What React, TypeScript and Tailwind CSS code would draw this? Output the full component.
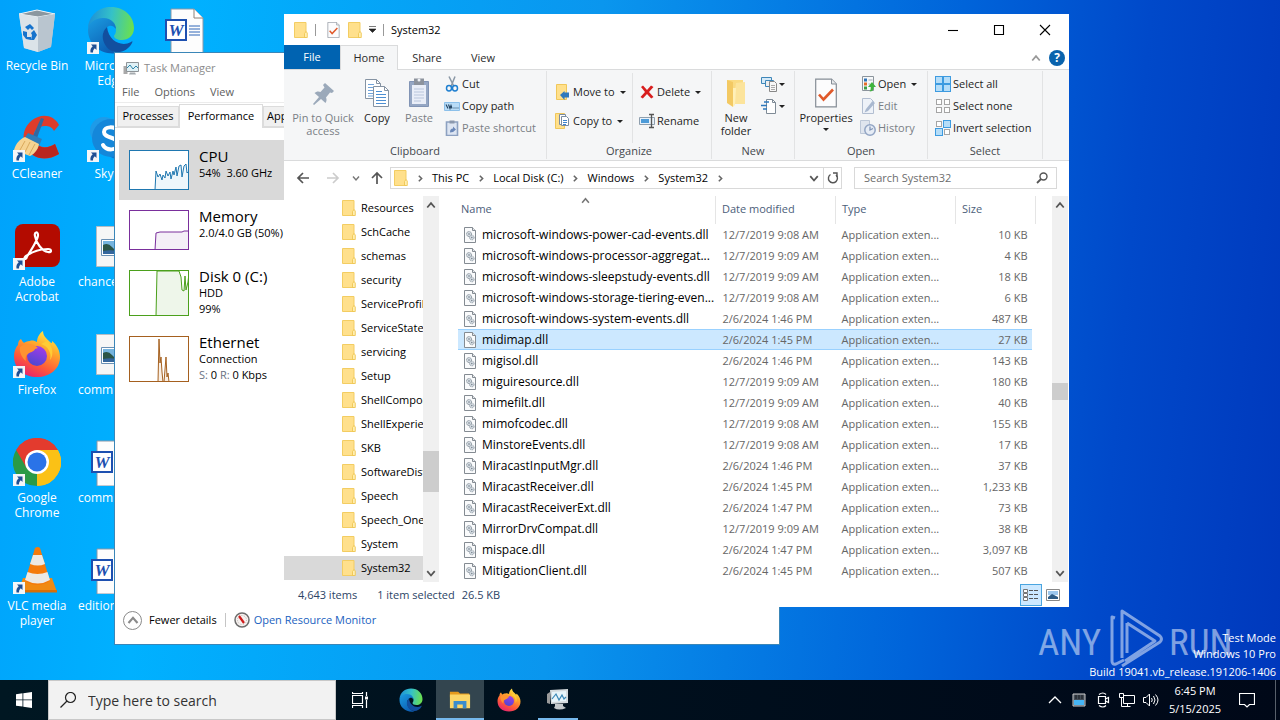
import type { ReactNode } from "react";

const files = [
  ["microsoft-windows-power-cad-events.dll", "12/7/2019 9:08 AM", "10 KB"],
  ["microsoft-windows-processor-aggregat...", "12/7/2019 9:09 AM", "4 KB"],
  ["microsoft-windows-sleepstudy-events.dll", "12/7/2019 9:09 AM", "18 KB"],
  ["microsoft-windows-storage-tiering-even...", "12/7/2019 9:08 AM", "6 KB"],
  ["microsoft-windows-system-events.dll", "2/6/2024 1:46 PM", "487 KB"],
  ["midimap.dll", "2/6/2024 1:45 PM", "27 KB"],
  ["migisol.dll", "2/6/2024 1:46 PM", "143 KB"],
  ["miguiresource.dll", "12/7/2019 9:09 AM", "180 KB"],
  ["mimefilt.dll", "12/7/2019 9:09 AM", "40 KB"],
  ["mimofcodec.dll", "12/7/2019 9:08 AM", "155 KB"],
  ["MinstoreEvents.dll", "12/7/2019 9:08 AM", "17 KB"],
  ["MiracastInputMgr.dll", "2/6/2024 1:46 PM", "37 KB"],
  ["MiracastReceiver.dll", "2/6/2024 1:45 PM", "1,233 KB"],
  ["MiracastReceiverExt.dll", "2/6/2024 1:47 PM", "73 KB"],
  ["MirrorDrvCompat.dll", "12/7/2019 9:09 AM", "38 KB"],
  ["mispace.dll", "2/6/2024 1:47 PM", "3,097 KB"],
  ["MitigationClient.dll", "2/6/2024 1:45 PM", "507 KB"],
];

const folders = [
  "Resources",
  "SchCache",
  "schemas",
  "security",
  "ServiceProfiles",
  "ServiceState",
  "servicing",
  "Setup",
  "ShellComponents",
  "ShellExperiences",
  "SKB",
  "SoftwareDistribution",
  "Speech",
  "Speech_OneCore",
  "System",
  "System32",
];

/* ---------- small icons ---------- */

const FolderIcon = () => (
  <svg className="h-4 w-[14px] shrink-0" viewBox="0 0 14 16">
    <path d="M.5.5h11.500v15H.5z" fill="#ffe08c" stroke="#f3cd62" />
    <path d="M10.500 15.500v-4l1.500-2 1.300 1.500v4.500z" fill="#ffeeb0" stroke="#eec34a" strokeWidth=".8" />
  </svg>
);

const DllIcon = () => (
  <svg className="h-4 w-[14px] shrink-0" viewBox="0 0 14 16">
    <path d="M1.500.5h8l3 3v12h-11z" fill="#fafbfc" stroke="#848b92" />
    <path d="M9.500.5v3h3" fill="#e6e9ec" stroke="#848b92" />
    <circle cx="6" cy="7" r="2.500" fill="#d5dce2" stroke="#7f8a95" strokeDasharray="1.200 .6" />
    <circle cx="6" cy="7" r=".8" fill="#6f7c88" />
    <circle cx="8.800" cy="10.500" r="2.300" fill="#d5dce2" stroke="#8f9aa5" strokeDasharray="1.200 .6" />
    <circle cx="8.800" cy="10.500" r=".7" fill="#6f7c88" />
  </svg>
);

const CheckPageIcon = ({ className }: { className: string }) => (
  <svg className={className} viewBox="0 0 22 29">
    <path d="M.7.7h15.800l4.800 4.800v22.800H.7z" fill="#fcfcfd" stroke="#858d96" strokeWidth="1.200" />
    <path d="M16.500.7v4.800h4.800" fill="#e8eaec" stroke="#858d96" />
    <path d="M4 16l4.500 5L18 11" fill="none" stroke="#e0592a" strokeWidth="2.600" />
  </svg>
);

const Caret = () => (
  <svg className="h-[3px] w-[6px] shrink-0" viewBox="0 0 6 3">
    <path d="M0 0h6L3 3z" fill="#222" />
  </svg>
);

const Chevron = ({ dir = "down", color = "#555", className = "h-2 w-2" }: { dir?: "up" | "down" | "right"; color?: string; className?: string }) => {
  const d = { up: "M1 6l3-3.500 3 3.500", down: "M1 2.500l3 3.500 3-3.500", right: "M2.500 1.500L5 4 2.500 6.500" }[dir];
  return (
    <svg className={className} viewBox="0 0 8 8">
      <path d={d} fill="none" stroke={color} strokeWidth="1.400" />
    </svg>
  );
};

const PinIcon = () => (
  <svg className="size-8" viewBox="0 0 32 32">
    <path d="M18 6l9 8-2 2-2-.5-4 5c1 2 .5 4-.5 5.500L14 22l-7 6-1-1 6-7-4.500-4c1.500-1.500 4-2 6-1l4-4.500L16 8z" fill="#9ba9ba" />
  </svg>
);

const CopyIcon = () => (
  <svg className="size-8" viewBox="0 0 32 32">
    <path d="M4.500 2.500h11l4 4v15h-15z" fill="#fff" stroke="#8593a3" />
    <path d="M15.500 2.500v4h4" fill="none" stroke="#8593a3" />
    <path d="M7 7.500h6M7 10.500h10M7 13.500h10M7 16.500h10M7 19h8" stroke="#6fa3da" />
    <path d="M12.500 9.500h11l4 4v16h-15z" fill="#fff" stroke="#8593a3" />
    <path d="M23.500 9.500v4h4" fill="none" stroke="#8593a3" />
    <path d="M15 14.500h6M15 17.500h10M15 20.500h10M15 23.500h10M15 26.500h10" stroke="#4d8fd2" />
  </svg>
);

const PasteIcon = () => (
  <svg className="size-8" viewBox="0 0 32 32">
    <path d="M6.500 4.500h19v25h-19z" fill="#95a7c4" stroke="#8194b5" />
    <path d="M9 8h14v19H9z" fill="#e9eef8" />
    <path d="M11 1.500h10V8H11z" fill="#8c939d" />
    <circle cx="16" cy="3" r="1.500" fill="#eef1f6" />
    <path d="M11 12h10M11 15h10M11 18h10M11 21h10M11 24h7" stroke="#b9c6dc" />
  </svg>
);

const CutIcon = () => (
  <svg className="size-4" viewBox="0 0 16 16">
    <path d="M5 .5l5 10M11 .5l-4 10" stroke="#8a98a6" strokeWidth="1.500" />
    <ellipse cx="5" cy="12.300" rx="2.500" ry="2.700" fill="none" stroke="#1e7fd0" strokeWidth="1.500" />
    <ellipse cx="11" cy="12.300" rx="2.500" ry="2.700" fill="none" stroke="#1e7fd0" strokeWidth="1.500" />
  </svg>
);

const CopyPathIcon = () => (
  <svg className="size-4" viewBox="0 0 16 16">
    <path d="M.5 4.500h15v8H.5z" fill="#b9dcf7" stroke="#8cc0ea" />
    <path d="M2 6.500l2 4M4.500 6.500l1.500 4 1-3 1 3M9.500 10h1M11.500 10h1M13.500 10h1" fill="none" stroke="#20405f" strokeWidth="1.100" />
  </svg>
);

const PasteShortcutIcon = () => (
  <svg className="size-4" viewBox="0 0 16 16">
    <path d="M2.500 2h11v13.500h-11z" fill="#dde5f2" stroke="#8da1c1" strokeWidth="1.600" />
    <path d="M5.500.5h5v3h-5z" fill="#8b98ad" />
    <path d="M6 12.500c0-3 1-4 3-4V6.500l3 3-3 2.500" fill="#6b88b8" />
  </svg>
);

const MoveIcon = () => (
  <svg className="size-4" viewBox="0 0 16 16">
    <path d="M1.500.5h10v15h-10z" fill="#ffe08c" stroke="#f0c75a" />
    <path d="M14 8.500v5H9.500V16L5 11l4.500-4v1.500z" fill="#2f79bd" />
  </svg>
);

const CopyToIcon = () => (
  <svg className="size-4" viewBox="0 0 16 16">
    <path d="M.5.5h9v15h-9z" fill="#ffe08c" stroke="#f0c75a" />
    <path d="M4.500 1.500h6v10h-6z" fill="#fff" stroke="#7b8ca0" />
    <path d="M6.500 3.500h5l2 2v7h-7z" fill="#fff" stroke="#7b8ca0" />
    <path d="M8 7.500h4M8 9.500h4M8 11.500h3" stroke="#3c83cc" />
  </svg>
);

const DeleteIcon = () => (
  <svg className="size-4" viewBox="0 0 16 16">
    <path d="M2 3l2-1.500L8 6l4-4.500L14.500 3 10 8l4.500 5-2.300 1.500L8 10l-4.200 4.500L1.500 13 6 8z" fill="#d81e1e" />
  </svg>
);

const RenameIcon = () => (
  <svg className="size-4" viewBox="0 0 16 16">
    <path d="M.5 4.500h15v7H.5z" fill="#e8f1fa" stroke="#8f9fae" />
    <path d="M2 6h8v4H2z" fill="#4d9bd8" />
    <path d="M12.500 1.500v13M10 1.500h5M10 14.500h5" stroke="#555" strokeWidth="1.300" />
  </svg>
);

const NewFolderIcon = () => (
  <svg className="size-8" viewBox="0 0 32 32">
    <path d="M7 3h16v23H7z" fill="#fadb83" />
    <path d="M16 6l9-1v22H13z" fill="#fce49c" />
    <path d="M7 3l6 2v25l-6-4z" fill="#f3c963" />
    <path d="M13 11h3l-1 17-2 2z" fill="#fff0b8" />
  </svg>
);

const NewItemIcon = () => (
  <svg className="size-4" viewBox="0 0 16 16">
    <path d="M.5 1.500h10v6H.5z" fill="#d5eaf8" stroke="#3e86b8" />
    <path d="M4.500 4.500h8v6h-8z" fill="#eee" stroke="#3e86b8" />
    <path d="M8.500 5.500h5l2 2v8h-7z" fill="#f7f7f7" stroke="#888" />
    <path d="M10 9.500h4M10 11.500h4M10 13.500h4" stroke="#aaa" />
  </svg>
);

const EasyAccessIcon = () => (
  <svg className="size-4" viewBox="0 0 16 16">
    <path d="M5.500 1.500h6l3 3v11h-9z" fill="#fff" stroke="#7f8b96" />
    <path d="M11.500 1.500v3h3" fill="none" stroke="#7f8b96" />
    <path d="M3 4h5M0 7.500h6M2 11h4" stroke="#2f79bd" strokeWidth="1.300" />
  </svg>
);

const OpenIcon = () => (
  <svg className="size-4" viewBox="0 0 16 16">
    <path d="M2.500.5h11v14h-11z" fill="#f7f9fa" stroke="#8b949c" />
    <path d="M4 2.500h3v3H4z" fill="#2e73b8" />
    <path d="M4 6.500h3v3H4z" fill="#e36d28" />
    <path d="M4 10.500h3v3H4z" fill="#3c9d45" />
    <path d="M8.500 4h4M8.500 8h2" stroke="#a2abb4" />
    <path d="M12 6l4 5h-2.500c0 3-1 4.500-4 4.500 1-1 1.300-2.500 1.200-4.500H8z" fill="#3fb43d" />
  </svg>
);

const EditIcon = () => (
  <svg className="size-4" viewBox="0 0 16 16">
    <path d="M2.500.5h8l3 3v12h-11z" fill="#eef2f8" stroke="#b2bed1" />
    <path d="M12.500 3l2.500 2-7 8-3.500 1.500L6 11z" fill="#a9b8cf" />
  </svg>
);

const HistoryIcon = () => (
  <svg className="size-4" viewBox="0 0 16 16">
    <path d="M.5.5h9v13h-9z" fill="#dfe5ee" stroke="#bcc7d7" />
    <circle cx="10" cy="10" r="5.200" fill="#e6ecf5" stroke="#92a5c4" strokeWidth="1.500" />
    <path d="M10 6.500V10l3-1.500" fill="none" stroke="#8296b8" strokeWidth="1.300" />
  </svg>
);

// on[] marks which of the four tiles are filled
const TilesIcon = ({ on }: { on: boolean[] }) => (
  <svg className="size-4" viewBox="0 0 16 16">
    {on.map((filled, i) => {
      const x = (i % 2) * 8;
      const y = i > 1 ? 8 : 0;
      return filled ? (
        <rect key={i} x={x + 0.5} y={y + 0.5} width="7" height="7" fill="#b5ddf8" stroke="#3d9be0" />
      ) : (
        <rect key={i} x={x + 1.5} y={y + 1.5} width="5" height="5" fill="#fff" stroke="#a5a5a5" />
      );
    })}
  </svg>
);

/* ---------- desktop icons ---------- */

const ShortcutArrow = () => (
  <svg className="absolute bottom-0 left-0 size-3" viewBox="0 0 12 12">
    <path d="M0 0h12v12H0z" fill="#f4f6f8" />
    <path d="M4 2.500h5.500V8L7.800 6.300C6.500 7.500 6 8.500 6 10.500H3.500C3 7.500 4 6 5.700 4.300z" fill="#1f4f93" />
  </svg>
);

const EdgeLogo = ({ className }: { className: string }) => (
  <svg className={className} viewBox="0 0 48 48">
    <defs>
      <linearGradient id="edgeTop" x1="0" y1=".3" x2="1" y2=".4">
        <stop offset="0" stopColor="#1c8fd8" />
        <stop offset=".5" stopColor="#35c1c8" />
        <stop offset="1" stopColor="#6be04e" />
      </linearGradient>
      <linearGradient id="edgeLeft" x1="0" y1="0" x2=".6" y2="1">
        <stop offset="0" stopColor="#1b9de2" />
        <stop offset="1" stopColor="#0c5fb4" />
      </linearGradient>
    </defs>
    <path d="M1 22C2 9 12 1 24 1c14 0 23 10 23 21 0 8-6 12-12 12-5 0-8-2-8-4 0-1 2-2 2-6 0-5-5-9-12-9-8 0-14 3-16 7z" fill="url(#edgeTop)" />
    <path d="M1 24c0-7 7-12 15-12 9 0 13 6 13 11-2-3-5-4-7-3-6 3-8 11-3 18 3 5 7 8 12 9C15 50 1 39 1 24z" fill="url(#edgeLeft)" />
    <path d="M20 21c-7 6-5 17 3 23 8 5 18 1 22-7 1-2 0-2-1-1-9 5-22 0-24-15z" fill="#124f9f" />
  </svg>
);

const FirefoxLogo = ({ className }: { className: string }) => (
  <svg className={className} viewBox="0 0 48 48">
    <defs>
      <linearGradient id="foxBody" x1=".8" y1="0" x2=".3" y2="1">
        <stop offset="0" stopColor="#fff04a" />
        <stop offset=".35" stopColor="#ffa92b" />
        <stop offset=".7" stopColor="#ff5a38" />
        <stop offset="1" stopColor="#e6236f" />
      </linearGradient>
      <linearGradient id="foxGlobe" x1=".7" y1="0" x2=".3" y2="1">
        <stop offset="0" stopColor="#a23be8" />
        <stop offset="1" stopColor="#4a48d0" />
      </linearGradient>
    </defs>
    <path d="M8 9c1 2 2 3 3 4 1-1 3-2 6-2 2-1 5 0 7 1 0-5 3-9 6-11 0 5 4 8 7 11 2 2 2 1 2-1 5 4 8 10 8 16 0 12-10 20-23 20S1 39 1 26c0-5 2-9 4-11 0-3 1-5 3-6z" fill="url(#foxBody)" />
    <circle cx="24" cy="26" r="10" fill="url(#foxGlobe)" />
    <path d="M7 17c5-4 13-4 18 1l-3 1c-1 3-5 3-7 5-2 1-3 4-2 7-4-3-7-9-6-14z" fill="#ff9330" />
    <path d="M28 14c7 2 11 9 9 16 4-5 3-14-3-19z" fill="#ffcc35" />
  </svg>
);

const RecycleBin = () => (
  <svg className="size-12" viewBox="0 0 48 48">
    <path d="M6 8l18-4 18 4-4 33-13 5-14-4z" fill="#c6d3dc" />
    <path d="M6 8l19 3 17-3-18-4z" fill="#8b979f" stroke="#eef4f8" />
    <path d="M6 8l19 3v35l-14-4z" fill="#dbe3e8" />
    <path d="M25 11l17-3-4 33-13 5z" fill="#b9c5cf" />
    <path d="M12 21l5-3 4 4-2 2-2-2-2 2zM10 25l4 1v5h4v3l-5-1-3-4zM21 24l3 5-3 5h-3l1-5-1-2z" fill="#1673cc" />
  </svg>
);

const CCleaner = () => (
  <svg className="size-12" viewBox="0 0 48 48">
    <path d="M46 11C42 3 33 0 25 3 12 8 8 21 12 31c5 13 20 18 34 9l-4-10c-8 5-17 4-20-3-4-8 2-15 10-15 4 0 7 1 9 5z" fill="#de3c2b" />
    <path d="M46 40C36 46 24 46 16 38l7-8c5 5 13 4 19 0z" fill="#b92620" />
    <path d="M28 4l3 1-7 19-4-2z" fill="#33689f" />
    <path d="M15 19l14 6-3 7-15-7z" fill="#2f7db9" />
    <path d="M12 23l14 7c-1 6-5 10-9 12L1 36c2-7 6-11 11-13z" fill="#f6d392" />
    <path d="M12 27L7 36M17 28l-5 10M22 30l-6 11" stroke="#d9a95d" />
  </svg>
);

const Skype = () => (
  <svg className="size-12" viewBox="0 0 48 48">
    <circle cx="17" cy="17" r="14" fill="#1e9be8" />
    <circle cx="31" cy="31" r="14" fill="#0b77cf" />
    <circle cx="24" cy="24" r="19" fill="#1487da" />
    <path d="M31 17c-3-5-14-5-14 1 0 7 14 4 14 12 0 7-12 7-15 1" fill="none" stroke="#fff" strokeWidth="4" strokeLinecap="round" />
  </svg>
);

const Acrobat = () => (
  <svg className="size-12" viewBox="0 0 48 48">
    <rect x="2" y="2" width="45" height="43" rx="8" fill="#b30b00" />
    <path d="M13 36c4-6 12-18 12-23 0-4-4-3-3 1 1 7 7 15 13 16 4 1 4-3 0-3-8 0-16 3-22 7-3 2-1 5 1 1z" fill="none" stroke="#fff" strokeWidth="2.200" />
  </svg>
);

const Chrome = () => (
  <svg className="size-12" viewBox="0 0 48 48">
    <path d="M24 24L3.200 12A24 24 0 0 1 44.800 12z" fill="#e33b2e" />
    <path d="M24 24l20.800-12A24 24 0 0 1 24 48z" fill="#fbc116" />
    <path d="M24 24v24A24 24 0 0 1 3.200 12z" fill="#2a9a47" />
    <path d="M3.200 12L13.600 30 24 12h20.800A24 24 0 0 0 3.200 12z" fill="#e33b2e" />
    <path d="M24 12h20.800A24 24 0 0 1 24 48l10.400-18z" fill="#fbc116" />
    <circle cx="24" cy="24" r="12" fill="#fff" />
    <circle cx="24" cy="24" r="9.500" fill="#2a73e8" />
  </svg>
);

const Vlc = () => (
  <svg className="size-12" viewBox="0 0 48 48">
    <path d="M10 32h29l5 14H5z" fill="#f08a12" />
    <path d="M5 44h39v2.500H5z" fill="#d86f08" />
    <path d="M22 2q3-2 5 0l10 33q-13 8-25 0z" fill="#f47b0c" />
    <path d="M20 9h9l3 9q-7 3-15 0zM14.500 26q10 4 20 0l2.500 8q-12 7-25 0z" fill="#ece9e4" />
  </svg>
);

const WordDoc = () => (
  <svg className="size-12" viewBox="0 0 48 48">
    <path d="M10 3h23l9 9v36H10z" fill="#fdfdfd" stroke="#8997a8" />
    <path d="M33 3v9h9" fill="#fff" stroke="#8c8179" />
    <path d="M28 20h11M28 23h11M28 26h11M28 29h11" stroke="#2f66b8" />
    <rect x="5" y="14" width="20" height="20" fill="#fff" stroke="#1d50b0" strokeWidth="2" />
    <text x="15" y="30" textAnchor="middle" fontSize="17" fontWeight="900" fontStyle="italic" fontFamily="Liberation Serif, serif" fill="#1d50b0">
      W
    </text>
  </svg>
);

const ImageDoc = () => (
  <svg className="size-12" viewBox="0 0 48 48">
    <path d="M9.500 4.500h29v40h-29z" fill="#f6f6f6" stroke="#b3bcc4" />
    <path d="M14.500 17.500h22v16h-22z" fill="#fff" stroke="#6a90b4" />
    <path d="M16 19h19v13H16z" fill="#76b4de" />
    <path d="M16 23q5-3 9 2t10 3v4H16z" fill="#2c5547" />
    <path d="M16 29q9-2 19 1v2H16z" fill="#35669c" />
  </svg>
);

type DesktopItemProps = { label: string; icon: ReactNode; shortcut?: boolean; clipped?: boolean };

const DesktopItem = ({ label, icon, shortcut, clipped }: DesktopItemProps) => (
  <button className="flex h-[108px] flex-col items-center overflow-hidden pt-[6px] text-[12px] leading-[15px] text-white">
    <span className="relative block size-12">
      {icon}
      {shortcut && <ShortcutArrow />}
    </span>
    <span className={clipped ? "mt-1 w-full pl-1 text-left" : "mt-1 text-center"}>{label}</span>
  </button>
);

const desktopItems: DesktopItemProps[] = [
  { label: "Recycle Bin", icon: <RecycleBin /> },
  { label: "CCleaner", icon: <CCleaner />, shortcut: true },
  { label: "Adobe Acrobat", icon: <Acrobat />, shortcut: true },
  { label: "Firefox", icon: <FirefoxLogo className="size-12" />, shortcut: true },
  { label: "Google Chrome", icon: <Chrome />, shortcut: true },
  { label: "VLC media player", icon: <Vlc />, shortcut: true },
  { label: "Microsoft Edge", icon: <EdgeLogo className="size-12" />, shortcut: true },
  { label: "Skype", icon: <Skype />, shortcut: true },
  { label: "chance", icon: <ImageDoc />, clipped: true },
  { label: "comm", icon: <ImageDoc />, clipped: true },
  { label: "comm", icon: <WordDoc />, clipped: true },
  { label: "edition", icon: <WordDoc />, clipped: true },
  { label: "", icon: <WordDoc /> },
];

/* ---------- task manager ---------- */

const tiles = [
  {
    name: "CPU",
    lines: ["54%  3.60 GHz"],
    active: true,
    h: 40,
    color: "#1f77b0",
    fill: "#eef6fb",
    d: "M26 40l1-19 2 6 2-3 2 6 1-5 2 3 1-7 2 5 2-4 1 7 2-8 1 4 2-8 1 9 2-10 2-1 1 12 2-11 2-2 1 9 2-2v23",
  },
  { name: "Memory", lines: ["2.0/4.0 GB (50%)"], h: 40, color: "#7a2f9c", fill: "#f4eff7", d: "M26 40l1-17 4-1h22l2-1h5v19" },
  { name: "Disk 0 (C:)", lines: ["HDD", "99%"], h: 46, color: "#4ba01c", fill: "#eef6ea", d: "M27 46l1-45h22l2 6 1 13 2 1 1-15 1 14 2-8 1-9v43" },
  { name: "Ethernet", lines: ["Connection"], net: true, h: 46, color: "#a5601f", fill: "#f9efe4", d: "M29 46l1-43 1 24 1-6 1 15 1 10M35 46l2-25 1 20 1-4 1 9" },
];

const Speed = () => (
  <svg className="size-4" viewBox="0 0 16 16">
    <circle cx="8" cy="8" r="7" fill="#f6f1ef" stroke="#6d6d6d" strokeWidth="1.500" />
    <circle cx="8" cy="8" r="4.500" fill="none" stroke="#b9b3b0" strokeDasharray="1 1.500" />
    <path d="M5 4l5 7" stroke="#cf1b1b" strokeWidth="2.200" />
  </svg>
);

const MonitorIcon = () => (
  <svg className="size-4" viewBox="0 0 16 16">
    <path d="M.5 6h4v8h-4z" fill="#a9a9a9" />
    <path d="M3.500 2.500h12v9h-12z" fill="#dff0f5" stroke="#8e9498" />
    <path d="M4 8l3-3 3 4 3-3 2 2" fill="none" stroke="#2d85aa" />
    <path d="M7 12.500h5l1 2H6z" fill="#a5abaf" />
  </svg>
);

const TaskManager = () => (
  <section className="absolute left-[115px] top-[53px] flex h-[591px] w-[664px] flex-col bg-white text-[11px] shadow-[0_0_0_1px_#3a86b8]">
    <header className="flex h-[30px] items-center gap-[5px] pl-2 text-[#8c8c8c]">
      <MonitorIcon />
      <h2>Task Manager</h2>
    </header>
    <nav className="flex h-5 items-center gap-[15px] border-b border-[#ececec] pl-[7px] text-[#606060]">
      <button>File</button>
      <button>Options</button>
      <button>View</button>
    </nav>
    <div className="mt-[2px] flex h-[23px] items-end border-b border-[#dcdcdc] pl-[2px]">
      <button className="h-[21px] w-[62px] border border-[#dcdcdc] bg-[#f0f0f0]">Processes</button>
      <button className="-mb-px h-6 w-[84px] border border-b-0 border-[#dcdcdc] bg-white">Performance</button>
      <button className="h-[21px] w-[66px] border border-[#dcdcdc] bg-[#f0f0f0] pl-[3px] text-left">App</button>
    </div>
    <div className="flex-1 pl-1 pt-3">
      {tiles.map(({ name, lines, active, net, h, color, fill, d }) => (
        <button
          key={name}
          className={`flex min-h-[60px] w-[210px] items-start gap-[10px] pb-[9px] pl-[10px] text-left ${active ? "bg-[#d9d9d9]" : ""}`}
        >
          <svg className="mt-[10px] w-[60px] shrink-0 bg-white" viewBox={`0 0 60 ${h}`}>
            <path d={d} fill={fill} stroke={color} strokeLinejoin="round" />
            <rect x=".5" y=".5" width="59" height={h - 1} fill="none" stroke={color} />
          </svg>
          <span className="block whitespace-pre pt-[7px] leading-4">
            <span className="block text-[15px] leading-[18px]">{name}</span>
            {lines.map((line) => (
              <span key={line} className="block">
                {line}
              </span>
            ))}
            {net && (
              <span className="block">
                <span className="text-gray-500">S:</span> 0 <span className="text-gray-500">R:</span> 0 Kbps
              </span>
            )}
          </span>
        </button>
      ))}
    </div>
    <footer className="flex h-12 items-center pl-2">
      <button className="flex items-center gap-[7px]">
        <span className="flex size-[19px] items-center justify-center rounded-full border border-[#8a8a8a]">
          <Chevron dir="up" color="#8a8a8a" className="size-3" />
        </span>
        Fewer details
      </button>
      <span className="mx-2 h-[14px] w-px bg-[#c5c5c5]" />
      <a href="#resmon" className="flex items-center gap-1 text-[#1a5fc0]">
        <Speed />
        Open Resource Monitor
      </a>
    </footer>
  </section>
);

/* ---------- explorer ---------- */

const Group = ({ label, className, children }: { label: string; className: string; children: ReactNode }) => (
  <div className={`my-px flex flex-col border-r border-[#e2e3e4] ${className}`}>
    <div className="flex h-[73px] pt-[2px]">{children}</div>
    <div className="text-center text-[#44484d]">{label}</div>
  </div>
);

const BigButton = ({ icon, label, className, disabled, caret }: { icon: ReactNode; label: string; className: string; disabled?: boolean; caret?: boolean }) => (
  <button disabled={disabled} className={`flex flex-col items-center pt-1 leading-[13px] disabled:text-[#7a7f86] ${className}`}>
    {icon}
    <span className="mt-[2px]">{label}</span>
    {caret && (
      <span className="mt-1">
        <Caret />
      </span>
    )}
  </button>
);

const SmallButton = ({ icon, label, disabled, caret }: { icon: ReactNode; label?: string; disabled?: boolean; caret?: boolean }) => (
  <button disabled={disabled} className="flex h-[22px] items-center gap-[2px] whitespace-nowrap disabled:text-[#7a7f86]">
    {icon}
    {label}
    {caret && (
      <span className={label ? "pl-[3px]" : ""}>
        <Caret />
      </span>
    )}
  </button>
);

const Ribbon = () => (
  <div className="flex h-[92px] border-y border-[#dadbdc] bg-[#f5f6f7] text-[11px] leading-4 text-[#1e1e1e]">
    <Group label="Clipboard" className="w-[263px]">
      <BigButton icon={<PinIcon />} label="Pin to Quick access" disabled className="ml-[3px] w-[72px]" />
      <BigButton icon={<CopyIcon />} label="Copy" className="w-9" />
      <BigButton icon={<PasteIcon />} label="Paste" disabled className="w-12" />
      <div className="pl-px">
        <SmallButton icon={<CutIcon />} label="Cut" />
        <SmallButton icon={<CopyPathIcon />} label="Copy path" />
        <SmallButton icon={<PasteShortcutIcon />} label="Paste shortcut" disabled />
      </div>
    </Group>
    <Group label="Organize" className="w-[165px]">
      <div className="flex w-[86px] flex-col gap-[7px] border-r border-[#e2e3e4] pl-2 pt-2">
        <SmallButton icon={<MoveIcon />} label="Move to" caret />
        <SmallButton icon={<CopyToIcon />} label="Copy to" caret />
      </div>
      <div className="flex flex-col gap-[7px] pl-[6px] pt-2">
        <SmallButton icon={<DeleteIcon />} label="Delete" caret />
        <SmallButton icon={<RenameIcon />} label="Rename" />
      </div>
    </Group>
    <Group label="New" className="w-[83px]">
      <BigButton icon={<NewFolderIcon />} label="New folder" className="w-12 px-1" />
      <div className="pl-px">
        <SmallButton icon={<NewItemIcon />} caret />
        <SmallButton icon={<EasyAccessIcon />} caret />
      </div>
    </Group>
    <Group label="Open" className="w-[133px]">
      <BigButton icon={<CheckPageIcon className="h-8 w-[22px]" />} label="Properties" caret className="w-[62px]" />
      <div className="pl-[3px]">
        <SmallButton icon={<OpenIcon />} label="Open" caret />
        <SmallButton icon={<EditIcon />} label="Edit" disabled />
        <SmallButton icon={<HistoryIcon />} label="History" disabled />
      </div>
    </Group>
    <Group label="Select" className="w-[115px]">
      <div className="pl-[7px]">
        <SmallButton icon={<TilesIcon on={[true, true, true, true]} />} label="Select all" />
        <SmallButton icon={<TilesIcon on={[false, false, false, false]} />} label="Select none" />
        <SmallButton icon={<TilesIcon on={[false, true, true, false]} />} label="Invert selection" />
      </div>
    </Group>
  </div>
);

const Arrow = ({ d, color }: { d: string; color: string }) => (
  <svg className="size-[14px]" viewBox="0 0 14 14">
    <path d={d} fill="none" stroke={color} strokeWidth="1.700" />
  </svg>
);

const Crumb = () => (
  <span className="flex w-6 justify-center">
    <Chevron dir="right" color="#666" className="size-[9px]" />
  </span>
);

const AddressBar = () => (
  <div className="flex h-[34px] items-center px-3">
    <button aria-label="Back">
      <Arrow d="M13 7H2M7 2L2 7l5 5" color="#555" />
    </button>
    <button aria-label="Forward" className="ml-4">
      <Arrow d="M1 7h11M7 2l5 5-5 5" color="#ccc" />
    </button>
    <button aria-label="Recent" className="ml-3">
      <Chevron color="#777" />
    </button>
    <button aria-label="Up" className="ml-[10px]">
      <Arrow d="M7 13V2M2 7l5-5 5 5" color="#555" />
    </button>
    <div className="ml-[6px] flex h-[22px] flex-1 items-center border border-[#d9d9d9] pl-[3px]">
      <FolderIcon />
      <Crumb />
      {["This PC", "Local Disk (C:)", "Windows", "System32"].map((name) => (
        <span key={name} className="flex items-center">
          <button className="whitespace-nowrap">{name}</button>
          <Crumb />
        </span>
      ))}
      <button aria-label="Previous locations" className="ml-auto flex w-[15px] justify-center">
        <Chevron className="size-[10px]" />
      </button>
      <button aria-label="Refresh" className="ml-[2px] flex h-full w-[18px] items-center justify-center border-l border-[#d9d9d9]">
        <svg className="size-3" viewBox="0 0 12 12">
          <path d="M3.500 2.500A4.500 4.500 0 1 0 9 3" fill="none" stroke="#555" strokeWidth="1.400" />
          <path d="M6 1h4v4" fill="none" stroke="#555" strokeWidth="1.400" />
        </svg>
      </button>
    </div>
    <label className="ml-3 flex h-[22px] w-[203px] items-center border border-[#d9d9d9] pl-[9px] pr-2">
      <input aria-label="Search" placeholder="Search System32" className="min-w-0 flex-1 outline-none placeholder:text-[#6d6d6d]" />
      <svg className="size-3" viewBox="0 0 12 12">
        <circle cx="7.500" cy="4.500" r="3.500" fill="none" stroke="#555" strokeWidth="1.400" />
        <path d="M5 7L1 11" stroke="#555" strokeWidth="1.800" />
      </svg>
    </label>
  </div>
);

const Scrollbar = ({ className }: { className: string }) => (
  <div className="flex w-4 shrink-0 flex-col items-center bg-[#f0f0f0] py-1">
    <Chevron dir="up" className="size-[10px]" />
    <div className={`w-full bg-[#cdcdcd] ${className}`} />
    <Chevron className="mt-auto size-[10px]" />
  </div>
);

const FileTable = () => (
  <table className="w-[578px] table-fixed border-collapse text-left">
    <colgroup>
      <col />
      <col className="w-[120px]" />
      <col className="w-[120px]" />
      <col className="w-[76px]" />
      <col className="w-1" />
    </colgroup>
    <thead>
      <tr className="h-7 text-[#4c607a]">
        <th className="relative border-r border-[#e5e5e5] pb-[2px] pl-[3px] font-normal">
          Name
          <Chevron dir="up" color="#777" className="absolute left-[123px] top-0 size-[9px]" />
        </th>
        <th className="border-r border-[#e5e5e5] pb-[2px] pl-[6px] font-normal">Date modified</th>
        <th className="border-r border-[#e5e5e5] pb-[2px] pl-[6px] font-normal">Type</th>
        <th className="pb-[2px] pl-[6px] font-normal">Size</th>
        <th className="border-r border-[#e5e5e5]" />
      </tr>
    </thead>
    <tbody className="text-[#666]">
      {files.map(([name, date, size]) => (
        <tr
          key={name}
          className={`h-[21px] ${name === "midimap.dll" ? "[&>td]:bg-[#cce8ff] [&>td]:shadow-[inset_0_1px_#99d1ff,inset_0_-1px_#99d1ff]" : ""}`}
        >
          <td className="pl-[5px] text-[12px] text-black">
            <span className="flex items-center gap-[5px] whitespace-nowrap">
              <DllIcon />
              {name}
            </span>
          </td>
          <td className="whitespace-nowrap pl-[7px]">{date}</td>
          <td className="whitespace-nowrap pl-[6px]">Application exten...</td>
          <td className="whitespace-nowrap pr-1 text-right">{size}</td>
        </tr>
      ))}
    </tbody>
  </table>
);

const Explorer = () => (
  <section className="absolute left-[284px] top-[14px] w-[785px] overflow-hidden bg-white text-[11px] leading-4">
    <header className="flex h-[31px] items-center pl-[10px]">
      <FolderIcon />
      <span className="mx-[7px] h-3 w-px bg-[#999]" />
      <CheckPageIcon className="ml-1 h-4 w-[13px]" />
      <span className="ml-2">
        <FolderIcon />
      </span>
      <svg className="ml-[7px] h-[7px] w-[7px]" viewBox="0 0 7 7">
        <path d="M0 .5h7M0 3h7L3.500 6.500z" fill="#222" stroke="#222" strokeWidth=".6" />
      </svg>
      <span className="mx-[7px] h-3 w-px bg-[#999]" />
      <h1>System32</h1>
      <div className="ml-auto mr-px flex">
        {[
          ["Minimize", "M0 5.500h10"],
          ["Maximize", "M.5.5h9v9h-9z"],
          ["Close", "M0 0l10 10M10 0L0 10"],
        ].map(([name, d]) => (
          <button key={name} aria-label={name} className="flex h-[30px] w-[46px] items-center justify-center">
            <svg className="size-[10px] overflow-visible" viewBox="0 0 10 10">
              <path d={d} fill="none" stroke="#000" strokeWidth="1.100" />
            </svg>
          </button>
        ))}
      </div>
    </header>
    <nav className="-mb-px flex h-[25px] text-[#2b2b2b]">
      <button className="mb-px w-14 bg-[#0063b1] text-white">File</button>
      <button className="relative w-[58px] border border-b-0 border-[#dadbdc] bg-[#f5f6f7]">Home</button>
      <button className="w-[58px]">Share</button>
      <button className="w-[54px]">View</button>
      <div className="ml-auto flex items-center gap-2 pr-1">
        <Chevron dir="up" color="#999" className="size-[10px]" />
        <button aria-label="Help" className="size-4 rounded-full bg-[#0a63ad] text-[12px] font-bold leading-4 text-white">
          ?
        </button>
      </div>
    </nav>
    <Ribbon />
    <AddressBar />
    <div className="flex h-[387px] items-stretch pt-px">
      <ul className="w-[139px] shrink-0 overflow-hidden">
        {folders.map((name) => (
          <li key={name} className={`flex h-6 items-center gap-[5px] pl-[58px] ${name === "System32" ? "bg-[#d9d9d9]" : ""}`}>
            <FolderIcon />
            {name}
          </li>
        ))}
      </ul>
      <Scrollbar className="mt-[241px] h-[41px]" />
      <div className="min-w-0 flex-1 pl-[19px]">
        <FileTable />
      </div>
      <Scrollbar className="mt-[173px] h-[17px]" />
      <span className="w-px" />
    </div>
    <footer className="flex h-[25px] items-center pl-[14px] text-[#2c4466]">
      <span>4,643 items</span>
      <span className="ml-5">1 item selected</span>
      <span className="ml-[7px]">26.5 KB</span>
      <button aria-label="Details view" className="ml-auto flex size-[22px] items-center justify-center border border-[#4aa5e0] bg-[#cce8ff]">
        <svg className="size-4" viewBox="0 0 16 16">
          <path d="M.5 2.500h4v3h-4zM.5 6.500h4v3h-4zM.5 10.500h4v3h-4z" fill="#fff" stroke="#777" />
          <path d="M6 3.500h4M11 3.500h4M6 7.500h4M11 7.500h4M6 11.500h4M11 11.500h4" stroke="#555" />
        </svg>
      </button>
      <button aria-label="Thumbnails view" className="mr-[5px] flex size-[22px] items-center justify-center">
        <svg className="h-3 w-[14px]" viewBox="0 0 14 12">
          <path d="M.5.5h13v11H.5z" fill="#fff" stroke="#888" />
          <path d="M2 2h10v4H2z" fill="#9cc7ee" />
          <path d="M2 8l4-3 6 3v2H2z" fill="#2c5b86" />
        </svg>
      </button>
    </footer>
  </section>
);

/* ---------- taskbar ---------- */

const Taskbar = () => (
  <footer className="relative flex h-10 bg-linear-to-r from-[#001722] to-[#000818] text-white">
    <button aria-label="Start" className="flex w-12 items-center justify-center">
      <svg className="size-4" viewBox="0 0 16 16">
        <path d="M0 2.200l6.500-.9v6.200H0zM7.300 1.200L16 0v7.500H7.300zM0 8.300h6.500v6.300L0 13.700zM7.300 8.300H16V16l-8.700-1.200z" fill="#fff" />
      </svg>
    </button>
    <label className="flex w-[288px] items-center gap-3 border border-[#c8c8c8] bg-[#f2f2f2] pl-[11px] text-[#222]">
      <svg className="size-4" viewBox="0 0 16 16">
        <circle cx="10.500" cy="5.500" r="5" fill="none" stroke="#222" strokeWidth="1.200" />
        <path d="M7 9L.5 15.500" stroke="#222" strokeWidth="1.300" />
      </svg>
      <input aria-label="Taskbar search" placeholder="Type here to search" className="min-w-0 flex-1 text-[14px] outline-none placeholder:text-[#333]" />
    </label>
    <button aria-label="Task view" className="flex w-12 items-center justify-center">
      <svg className="size-4" viewBox="0 0 16 16">
        <path d="M.5 3.500h10v8H.5zM.5 0v1.500h10V0M.5 16v-2.500h10V16M14.500 0v4M14.500 8v8" fill="none" stroke="#fff" strokeWidth="1.200" />
        <path d="M13 4.500h3v3h-3z" fill="#fff" />
      </svg>
    </button>
    <button aria-label="Edge" className="ml-[3px] flex w-12 items-center justify-center">
      <EdgeLogo className="size-6" />
    </button>
    <button aria-label="File Explorer" className="ml-px flex w-12 items-center justify-center border-b-2 border-[#76b9ed] bg-[#33454f]">
      <svg className="size-6 pt-[2px]" viewBox="0 0 24 24">
        <path d="M1 3h9l2 2h10v4H1z" fill="#e59a1c" />
        <path d="M1 6h22v15H1z" fill="#fcd667" />
        <path d="M5 21v-8h14v8h-4v-4H9v4z" fill="#3a8ccd" />
      </svg>
    </button>
    <button aria-label="Firefox" className="ml-px flex w-12 items-center justify-center">
      <FirefoxLogo className="size-6" />
    </button>
    <button aria-label="Task Manager" className="ml-[5px] flex w-10 items-center justify-center border-b-2 border-[#76b9ed]">
      <svg className="size-6" viewBox="0 0 24 24">
        <path d="M1 7l3-2v12l-3-1z" fill="#9b9b9b" />
        <path d="M4 3l18-1v14L5 17z" fill="#d5dadd" />
        <path d="M6 5l14-1v10L6 15z" fill="#e7f4fa" />
        <path d="M6 12l4-5 3 6 3-5 2 4 2-2" fill="none" stroke="#3a86b5" strokeWidth="1.200" />
        <path d="M9 17h8v2l3 2q-7 3-12 0l1-2z" fill="#c4c9cc" />
      </svg>
    </button>
    <div className="ml-auto flex items-center gap-2">
      <svg className="size-4" viewBox="0 0 16 16">
        <path d="M2 11l6-6 6 6" fill="none" stroke="#fff" strokeWidth="1.300" />
      </svg>
      <svg className="size-4" viewBox="0 0 16 16">
        <path d="M2 2h12v12H2z" fill="#444d57" stroke="#ccc" />
        <path d="M3 8h10v5H3z" fill="#46b5f5" />
        <path d="M5 3v4M8 3v4M11 3v4" stroke="#15181c" />
      </svg>
      <svg className="size-4" viewBox="0 0 16 16">
        <path d="M3.500 4.500h7v7h-7zM10.500 7l3-1.500v5l-3-1.500M4 2.500Q8-.5 11 2.500M4 13.500q4 3 7 0" fill="none" stroke="#fff" strokeWidth="1.200" />
      </svg>
      <svg className="size-4" viewBox="0 0 16 16">
        <path d="M4.500 3.500h11v8h-11zM.5 1.500h4v4h-4zM2.500 6v8.500h9M8.500 12v2.500" fill="none" stroke="#fff" />
      </svg>
      <svg className="size-4" viewBox="0 0 16 16">
        <path d="M.5 5.500H3L6.500 2v12L3 10.500H.5zM8.500 6q1.500 2 0 4M10.500 4q3 4 0 8M12.500 2.500q5 5.500 0 11" fill="none" stroke="#fff" />
      </svg>
      <div className="flex w-14 flex-col items-center whitespace-nowrap text-[11px] leading-[18px]">
        <span>6:45 PM</span>
        <span>5/15/2025</span>
      </div>
      <button aria-label="Notifications" className="ml-2 mr-3 size-4">
        <svg viewBox="0 0 16 16">
          <path d="M.5 1.500h15v11h-5L8 15l-2.500-2.500h-5z" fill="none" stroke="#fff" strokeWidth="1.200" />
        </svg>
      </button>
      <span className="mr-1 h-10 w-px bg-[#58606b]" />
    </div>
  </footer>
);

const Watermark = () => (
  <div className="absolute bottom-0 right-1 text-right text-[11px] leading-4 text-white">
    <svg className="absolute bottom-[10px] right-[42px] h-[62px] w-[196px]" viewBox="0 0 196 62">
      <g fill="#fff" fillOpacity=".5" fontFamily="Liberation Sans Narrow, Roboto Condensed, Open Sans Condensed, DejaVu Sans Condensed, sans-serif" fontSize="37">
        <text x="0" y="47">
          ANY
        </text>
        <text x="131" y="47">
          RUN
        </text>
      </g>
      <path d="M77 10l-3-1v44q0 4 4 3l8-4M84 50V3l38 25q3 3 0 6L84 58M89 15l28 18-30 20M89 15v30" fill="none" stroke="#fff" strokeOpacity=".5" strokeWidth="3" strokeLinejoin="round" />
    </svg>
    <p className="relative">Test Mode</p>
    <p className="relative">Windows 10 Pro</p>
    <p className="relative mt-[2px]">Build 19041.vb_release.191206-1406</p>
  </div>
);

const App = () => {
  return (
    <div className="flex min-h-screen flex-col font-['Open_Sans','Noto_Sans',sans-serif]">
      <main className="relative flex-1 overflow-hidden bg-[linear-gradient(95deg,#00a2fb_0%,#00b1ff_14%,#0a96ee_45%,#0064da_72%,#0049ca_86%,#0038bc_100%)]">
        <div className="grid w-[222px] grid-flow-col grid-cols-3 grid-rows-6">
          {desktopItems.map((item, i) => (
            <DesktopItem key={i} {...item} />
          ))}
        </div>
        <Watermark />
        <TaskManager />
        <Explorer />
      </main>
      <Taskbar />
    </div>
  );
};

export default App;
